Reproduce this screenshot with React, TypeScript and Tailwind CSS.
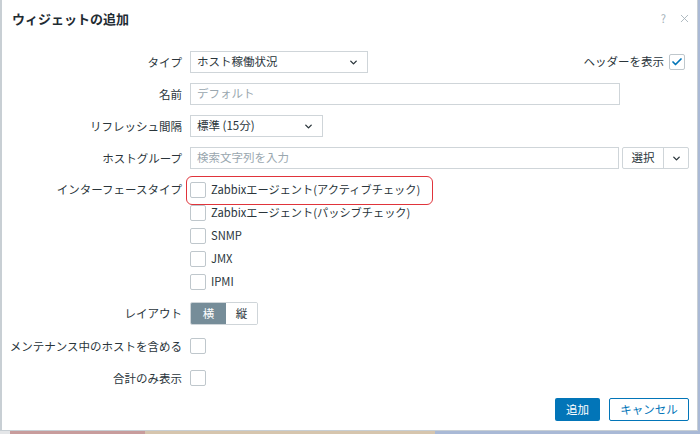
import React from 'react';
import { ChevronDown, Check, X } from 'lucide-react';

const labelCls = 'text-right text-[11.5px] text-[#2a353b] leading-[22px] whitespace-nowrap';

function Box({ checked = false }: { checked?: boolean }) {
  return (
    <span className="w-4 h-4 shrink-0 border border-[#bfc7cc] rounded-[2px] bg-white flex items-center justify-center">
      {checked && <Check size={12} strokeWidth={3.5} className="text-[#0275b8]" />}
    </span>
  );
}

function Select({ value, width }: { value: string; width: string }) {
  return (
    <div className={`${width} h-[22px] border border-[#cfd5d9] bg-white flex items-center justify-between pl-[6px] pr-[8px] text-[11.5px] text-[#2a353b]`}>
      <span>{value}</span>
      <ChevronDown size={11} strokeWidth={3} className="text-[#2a353b]" />
    </div>
  );
}

function CheckItem({ label }: { label: string }) {
  return (
    <div className="h-[23px] flex items-center gap-[5px] text-[11.2px] text-[#2a353b]">
      <Box />
      <span>{label}</span>
    </div>
  );
}

export default function App() {
  const interfaces = [
    'Zabbixエージェント(アクティブチェック)',
    'Zabbixエージェント(パッシブチェック)',
    'SNMP',
    'JMX',
    'IPMI',
  ];

  return (
    <div
      className="w-[700px] h-[434px] bg-[#a9b9d6] overflow-hidden"
      style={{ fontFamily: '"Noto Sans CJK JP", "Liberation Sans", sans-serif' }}
    >
      <div className="w-[698px] h-[431px] bg-white border-l-2 border-r border-b border-[#c8cfd4] flex flex-col">
        {/* header */}
        <div className="h-[51px] flex items-start justify-between pl-[10px] pr-[6px] pt-[9px]">
          <h4 className="text-[13px] font-bold text-[#1f2c33] leading-[20px]">ウィジェットの追加</h4>
          <div className="flex items-center gap-[12px] text-[#a3b0b8] pt-[1px]">
            <span className="text-[11px]">?</span>
            <X size={13} strokeWidth={1.6} />
          </div>
        </div>

        {/* form */}
        <div className="grid grid-cols-[180px_1fr] gap-x-[8px] gap-y-[10px] pr-[8px]">
          <span className={labelCls}>タイプ</span>
          <div className="flex items-center justify-between">
            <Select value="ホスト稼働状況" width="w-[178px]" />
            <div className="flex items-center gap-[5px] pr-[4px] text-[11.5px] text-[#2a353b]">
              <span>ヘッダーを表示</span>
              <Box checked />
            </div>
          </div>

          <span className={labelCls}>名前</span>
          <div className="w-[430px] h-[22px] border border-[#cfd5d9] flex items-center pl-[6px] text-[11.5px] text-[#9aa7af]">
            デフォルト
          </div>

          <span className={labelCls}>リフレッシュ間隔</span>
          <Select value="標準 (15分)" width="w-[133px]" />

          <span className={labelCls}>ホストグループ</span>
          <div className="flex items-center gap-[3px]">
            <div className="w-[429px] h-[22px] border border-[#cfd5d9] flex items-center pl-[6px] text-[11.5px] text-[#9aa7af]">
              検索文字列を入力
            </div>
            <div className="flex h-[22px] border border-[#cfd5d9] rounded-[2px]">
              <span className="w-[41px] flex items-center justify-center text-[11.5px] text-[#2a353b] border-r border-[#cfd5d9]">選択</span>
              <span className="w-[24px] flex items-center justify-center">
                <ChevronDown size={11} strokeWidth={3} className="text-[#2a353b]" />
              </span>
            </div>
          </div>

          <span className={`${labelCls} mt-[-1px]`}>インターフェースタイプ</span>
          <div className="relative -mt-[1px] -mb-[1px]">
            {interfaces.map((i) => (
              <CheckItem key={i} label={i} />
            ))}
            <div className="absolute left-[-4px] top-[-2px] w-[247px] h-[29px] border-[1.5px] border-[#e0343b] rounded-[6px]" />
          </div>

          <span className={labelCls}>レイアウト</span>
          <div className="flex h-[23px] w-[68px] border border-[#cfd5d9] rounded-[2px] overflow-hidden text-[11.5px]">
            <span className="w-[35px] flex items-center justify-center bg-[#768d99] text-white">横</span>
            <span className="flex-1 flex items-center justify-center bg-white text-[#2a353b]">縦</span>
          </div>

          <span className={labelCls}>メンテナンス中のホストを含める</span>
          <div className="h-[22px] flex items-center"><Box /></div>

          <span className={labelCls}>合計のみ表示</span>
          <div className="h-[22px] flex items-center"><Box /></div>
        </div>

        {/* footer */}
        <div className="flex justify-end gap-[9px] pr-[8px] mt-[9px]">
          <button className="w-[45px] h-[23px] bg-[#0275b8] text-white text-[11.5px] rounded-[2px]">追加</button>
          <button className="w-[80px] h-[23px] bg-white border border-[#0275b8] text-[#0275b8] text-[11.5px] rounded-[2px]">キャンセル</button>
        </div>
      </div>
      <div className="flex h-[3px]">
        <span className="w-[10px] bg-[#e4e6e8]" />
        <span className="w-[135px] bg-[#c89c9c]" />
        <span className="w-[290px] bg-[#d6c5ad]" />
        <span className="flex-1 bg-[#a9b9d6]" />
      </div>
    </div>
  );
}
